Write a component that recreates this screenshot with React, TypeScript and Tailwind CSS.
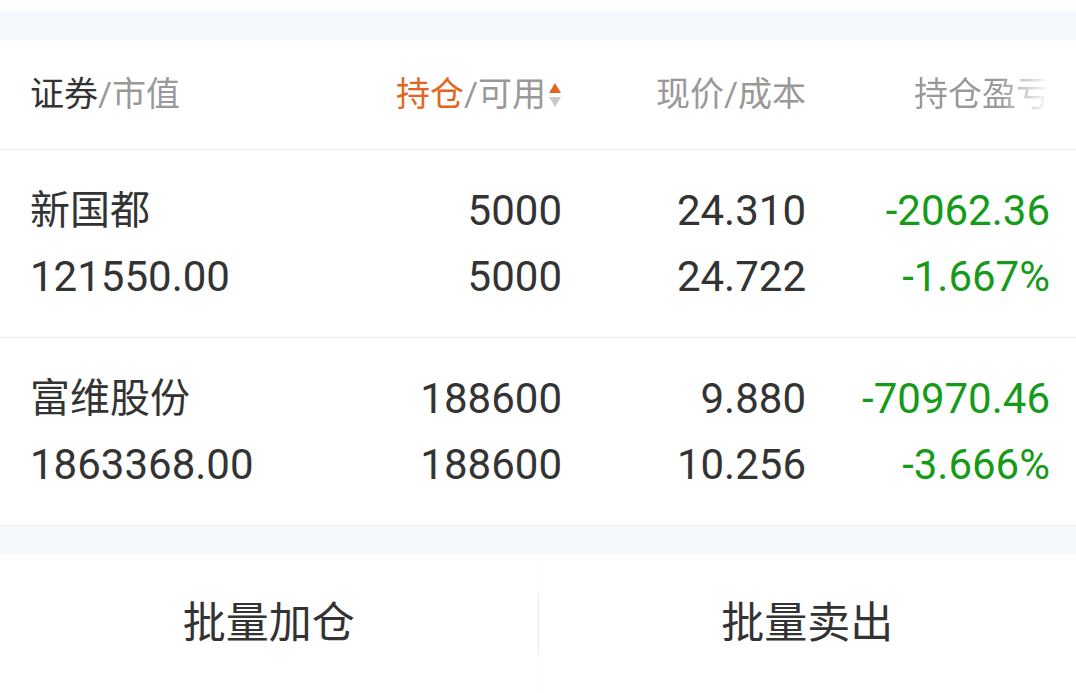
import React from 'react';

type Holding = {
  name: string;
  value: string;
  hold: string;
  avail: string;
  price: string;
  cost: string;
  pnl: string;
  pct: string;
};

const holdings: Holding[] = [
  {
    name: '新国都',
    value: '121550.00',
    hold: '5000',
    avail: '5000',
    price: '24.310',
    cost: '24.722',
    pnl: '-2062.36',
    pct: '-1.667%',
  },
  {
    name: '富维股份',
    value: '1863368.00',
    hold: '188600',
    avail: '188600',
    price: '9.880',
    cost: '10.256',
    pnl: '-70970.46',
    pct: '-3.666%',
  },
];

function SortIcon() {
  return (
    <svg width="14" height="28" viewBox="0 0 14 28" className="ml-[2px]">
      <path d="M7 2 L13 12 L1 12 Z" fill="#e2661f" />
      <path d="M1 16 L13 16 L7 26 Z" fill="#c8c8c8" />
    </svg>
  );
}

export default function App() {
  return (
    <div
      className="w-[1076px] h-[693px] bg-white overflow-hidden text-[#333]"
      style={{ fontFamily: 'Roboto, "Noto Sans CJK SC", sans-serif' }}
    >
      <div className="h-[12px] bg-white" />
      <div className="h-[28px] bg-[#f5f8fd]" />

      {/* header */}
      <div className="flex h-[110px] items-center border-b border-[#ededed] text-[34px] text-[#999]">
        <div className="w-[300px] pl-[30px]">
          <span className="text-[#333]">证券</span>/市值
        </div>
        <div className="w-[262px] flex items-center justify-end">
          <span className="text-[#e2661f]">持仓</span>/可用
          <SortIcon />
        </div>
        <div className="w-[244px] text-right">现价/成本</div>
        <div className="w-[244px] text-right">
          <span className="bg-linear-to-r from-[#999] from-[62%] to-[#ffffff] to-[100%] bg-clip-text text-transparent">
            持仓盈亏
          </span>
        </div>
      </div>

      {/* rows */}
      {holdings.map((h) => (
        <div
          key={h.name}
          className="flex h-[188px] pt-[28px] border-b border-[#ededed] text-[42px] leading-[66px]"
        >
          <div className="w-[300px] pl-[30px]">
            <div className="text-[40px]">{h.name}</div>
            <div>{h.value}</div>
          </div>
          <div className="w-[262px] text-right">
            <div>{h.hold}</div>
            <div>{h.avail}</div>
          </div>
          <div className="w-[244px] text-right">
            <div>{h.price}</div>
            <div>{h.cost}</div>
          </div>
          <div className="w-[244px] text-right text-[#169a1a]">
            <div>{h.pnl}</div>
            <div>{h.pct}</div>
          </div>
        </div>
      ))}

      <div className="h-[28px] bg-[#f5f8fd]" />

      {/* actions */}
      <div className="flex h-[139px] text-[43px] text-[#333]">
        <button className="flex-1 flex items-center justify-center">批量加仓</button>
        <div className="flex flex-col w-px">
          <div className="flex-1 bg-[#f8f8f8]" />
          <div className="h-[56px] bg-[#e6e6e6]" />
          <div className="flex-1 bg-[#f8f8f8]" />
        </div>
        <button className="flex-1 flex items-center justify-center">批量卖出</button>
      </div>
    </div>
  );
}
